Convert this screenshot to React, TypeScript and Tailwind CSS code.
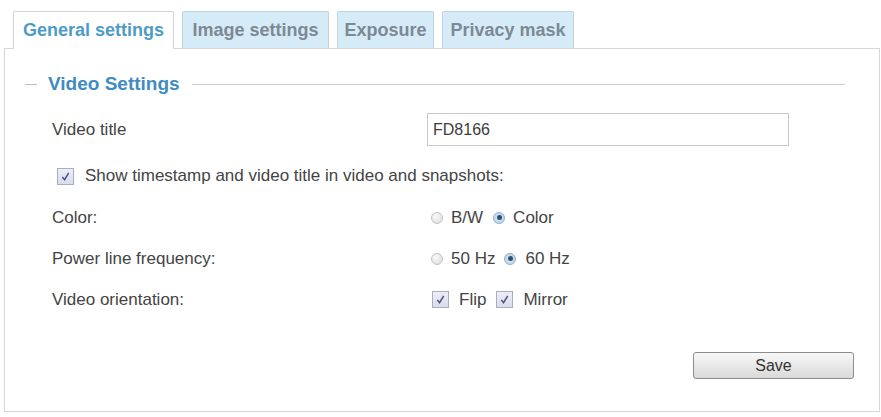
import { useState } from "react";

type Tab = { label: string; width: string };

const tabs: Tab[] = [
  { label: "General settings", width: "w-[161px]" },
  { label: "Image settings", width: "w-[147px]" },
  { label: "Exposure", width: "w-[97px]" },
  { label: "Privacy mask", width: "w-[132px]" },
];

function Radio({ checked }: { checked: boolean }) {
  return (
    <span
      className={
        checked
          ? "flex h-[12px] w-[12px] items-center justify-center rounded-full border border-[#8fb0cc] bg-[radial-gradient(circle,#dbe8f3_0%,#b9cfe2_100%)]"
          : "h-[12px] w-[12px] rounded-full border border-[#c4c4c4] bg-[radial-gradient(circle_at_40%_35%,#fafafa_0%,#d8d8d8_100%)]"
      }
    >
      {checked ? <span className="h-[5px] w-[5px] rounded-full bg-[#2a4f79]" /> : null}
    </span>
  );
}

function Check({ checked }: { checked: boolean }) {
  return (
    <span className="flex h-[17px] w-[17px] items-center justify-center border border-[#a7adc2] bg-gradient-to-b from-[#eceef7] to-[#d9dcea]">
      {checked ? (
        <svg viewBox="0 0 12 12" className="h-[11px] w-[11px]" fill="none" stroke="#4c4f8a" strokeWidth="1.6">
          <path d="M2.5 6.5 L5 9.5 L9.5 2" />
        </svg>
      ) : null}
    </span>
  );
}

export default function App() {
  const [title, setTitle] = useState("FD8166");

  return (
    <div className="h-[417px] w-[881px] overflow-hidden bg-white font-['Liberation_Sans',Arial,sans-serif] text-[17px] text-[#444]">
      <div className="relative z-10 flex gap-[8px] pl-[13px] pt-[11px]">
        {tabs.map((tab, i) =>
          i === 0 ? (
            <div
              key={tab.label}
              className={`${tab.width} -mb-px flex h-[38px] items-center justify-center rounded-t-[2px] border border-b-0 border-[#d2d2d2] bg-white text-[18px] font-bold text-[#4d9cc8]`}
            >
              {tab.label}
            </div>
          ) : (
            <div
              key={tab.label}
              className={`${tab.width} flex h-[37px] items-center justify-center rounded-t-[2px] border border-b-0 border-[#bfd4df] bg-[#d6ebf8] text-[18px] font-bold text-[#7d8993]`}
            >
              {tab.label}
            </div>
          ),
        )}
      </div>

      <div className="ml-[4px] h-[364px] w-[876px] border border-[#d6d6d6]">
        <div className="mt-[23px] flex h-[24px] items-center">
          <span className="ml-[20px] h-px w-[12px] bg-[#bdbdbd]" />
          <span className="ml-[11px] text-[19px] font-bold text-[#3f8cc2]">Video Settings</span>
          <span className="ml-[12px] mr-[34px] h-px flex-1 bg-[#cdcdcd]" />
        </div>

        <div className="mt-[17px] flex h-[33px] items-center pl-[47px]">
          <span className="w-[375px]">Video title</span>
          <input
            value={title}
            onChange={(e) => setTitle(e.target.value)}
            className="h-[33px] w-[362px] border border-[#c9c9c9] px-[5px] text-[16px] text-[#3c3c3c] outline-none"
          />
        </div>

        <div className="mt-[9px] flex h-[42px] items-center pl-[52px]">
          <Check checked />
          <span className="ml-[11px]">Show timestamp and video title in video and snapshots:</span>
        </div>

        <div className="flex h-[41px] items-center pl-[47px]">
          <span className="w-[379px]">Color:</span>
          <Radio checked={false} />
          <span className="ml-[8px]">B/W</span>
          <span className="ml-[10px]" />
          <Radio checked />
          <span className="ml-[8px]">Color</span>
        </div>

        <div className="flex h-[41px] items-center pl-[47px]">
          <span className="w-[379px]">Power line frequency:</span>
          <Radio checked={false} />
          <span className="ml-[8px]">50 Hz</span>
          <span className="ml-[9px]" />
          <Radio checked />
          <span className="ml-[9px]">60 Hz</span>
        </div>

        <div className="flex h-[41px] items-center pl-[47px]">
          <span className="w-[380px]">Video orientation:</span>
          <Check checked />
          <span className="ml-[10px]">Flip</span>
          <span className="ml-[10px]" />
          <Check checked />
          <span className="ml-[10px]">Mirror</span>
        </div>

        <div className="mt-[32px] flex justify-end pr-[25px]">
          <button
            type="button"
            className="h-[27px] w-[161px] rounded-[3px] border border-[#8c8c8c] bg-gradient-to-b from-[#f8f8f8] to-[#d9d9d9] text-[16px] text-[#333]"
          >
            Save
          </button>
        </div>
      </div>
    </div>
  );
}
